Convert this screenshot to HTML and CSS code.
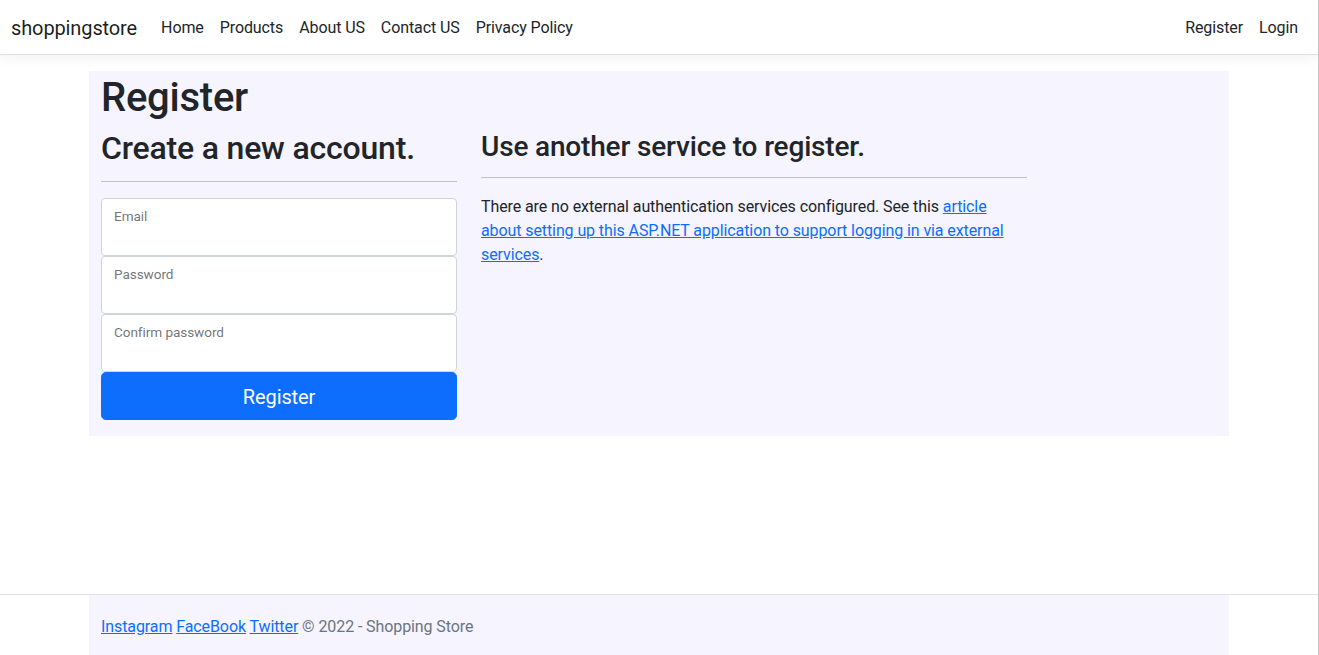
FILE: index.html
```html
<!DOCTYPE html>
<html lang="en">
<head>
<meta charset="utf-8">
<title>Register - shoppingstore</title>
<link rel="stylesheet" href="styles.css">
</head>
<body>
<header class="site-header">
  <nav class="navbar">
    <div class="nav-left">
      <a class="brand" href="#">shoppingstore</a>
      <ul class="nav-list">
        <li><a class="nav-link" href="#">Home</a></li>
        <li><a class="nav-link" href="#">Products</a></li>
        <li><a class="nav-link" href="#">About US</a></li>
        <li><a class="nav-link" href="#">Contact US</a></li>
        <li><a class="nav-link" href="#">Privacy Policy</a></li>
      </ul>
    </div>
    <ul class="nav-list">
      <li><a class="nav-link" href="#">Register</a></li>
      <li><a class="nav-link" href="#">Login</a></li>
    </ul>
  </nav>
</header>

<main class="main">
  <div class="container">
    <h1 class="page-title">Register</h1>
    <div class="row">
      <div class="col-form">
        <form class="reg-form">
          <h2 class="form-title">Create a new account.</h2>
          <hr class="divider">
          <div class="floating">
            <input class="field" type="email" aria-label="Email">
            <label class="float-label">Email</label>
          </div>
          <div class="floating">
            <input class="field" type="password" aria-label="Password">
            <label class="float-label">Password</label>
          </div>
          <div class="floating">
            <input class="field" type="password" aria-label="Confirm password">
            <label class="float-label">Confirm password</label>
          </div>
          <button class="btn-primary" type="button">Register</button>
        </form>
      </div>
      <div class="col-ext">
        <section>
          <h3 class="ext-title">Use another service to register.</h3>
          <hr class="divider">
          <p class="ext-text">There are no external authentication services configured. See this <a class="link" href="#">article
            about setting up this ASP.NET application to support logging in via external services</a>.</p>
        </section>
      </div>
    </div>
  </div>
</main>

<footer class="footer">
  <div class="footer-inner">
    <a class="link" href="#">Instagram</a> <a class="link" href="#">FaceBook</a> <a class="link" href="#">Twitter</a> &copy; 2022 - Shopping Store
  </div>
</footer>
</body>
</html>
```
FILE: styles.css
```css
* { box-sizing: border-box; letter-spacing: -0.006em; }

html {
  border-right: 1px solid #c3c3c3;
}

body {
  margin: 0;
  min-height: 100vh;
  display: flex;
  flex-direction: column;
  font-family: Roboto, "Liberation Sans", sans-serif;
  font-size: 16px;
  line-height: 1.5;
  color: #212529;
  background: #fff;
}

/* ---------- navbar ---------- */
.site-header {
  background: #fff;
  border-bottom: 1px solid #dee2e6;
  box-shadow: 0 4px 12px rgba(0, 0, 0, 0.05);
  margin-bottom: 16px;
  position: relative;
  z-index: 1;
}

.navbar {
  height: 54px;
  padding: 0 12px 0 11px;
  display: flex;
  align-items: center;
  justify-content: space-between;
}

.nav-left {
  display: flex;
  align-items: center;
}

.brand {
  font-size: 20px;
  line-height: 30px;
  padding-top: 2px;
  color: rgba(0, 0, 0, 0.9);
  text-decoration: none;
  margin-right: 16px;
}

.nav-list {
  list-style: none;
  margin: 0;
  padding: 0;
  display: flex;
}

.nav-link {
  display: block;
  padding: 9px 8px 7px;
  color: #212529;
  text-decoration: none;
  line-height: 24px;
}

/* ---------- main ---------- */
.container {
  width: 1140px;
  margin: 0 auto;
  padding: 0 12px 16px;
  background: #f5f4ff;
}

.page-title {
  margin: 0 0 8px;
  padding-top: 6px;
  font-size: 40px;
  line-height: 42px;
  font-weight: 500;
}

.row {
  display: grid;
  grid-template-columns: 380px 570px;
  margin: 0 -12px;
}

.col-form,
.col-ext {
  padding: 0 12px;
}

.form-title {
  margin: 0 0 8px;
  padding-top: 4px;
  font-size: 32px;
  line-height: 34.4px;
  font-weight: 500;
}

.ext-title {
  margin: 0 0 8px;
  padding-top: 6px;
  font-size: 28px;
  line-height: 27.6px;
  font-weight: 500;
}

.divider {
  margin: 16px 0;
  border: 0;
  border-top: 1px solid rgba(33, 37, 41, 0.25);
}

.floating {
  position: relative;
}

.field {
  display: block;
  width: 100%;
  height: 58px;
  margin: 0;
  padding: 26px 12px 8px;
  font: inherit;
  color: #212529;
  background: #fff;
  border: 1px solid #ced4da;
  border-radius: 4px;
}

.float-label {
  position: absolute;
  top: 8px;
  left: 13px;
  font-size: 13.6px;
  line-height: 20px;
  color: rgba(33, 37, 41, 0.65);
  pointer-events: none;
}

.btn-primary {
  display: block;
  width: 100%;
  height: 48px;
  padding: 9px 16px 7px;
  font-family: inherit;
  font-size: 20px;
  line-height: 30px;
  color: #fff;
  background: #0d6efd;
  border: 1px solid #0d6efd;
  border-radius: 4.8px;
  cursor: pointer;
}

.ext-text {
  margin: 0 0 15px;
  padding-top: 1px;
}

.link {
  color: #0d6efd;
  text-decoration: underline;
}

/* ---------- footer ---------- */
.footer {
  margin-top: auto;
  border-top: 1px solid #dee2e6;
  white-space: nowrap;
  color: #6c757d;
}

.footer-inner {
  width: 1140px;
  margin: 0 auto;
  padding: 3px 12px 0;
  line-height: 57px;
  background: #f5f4ff;
}
```
